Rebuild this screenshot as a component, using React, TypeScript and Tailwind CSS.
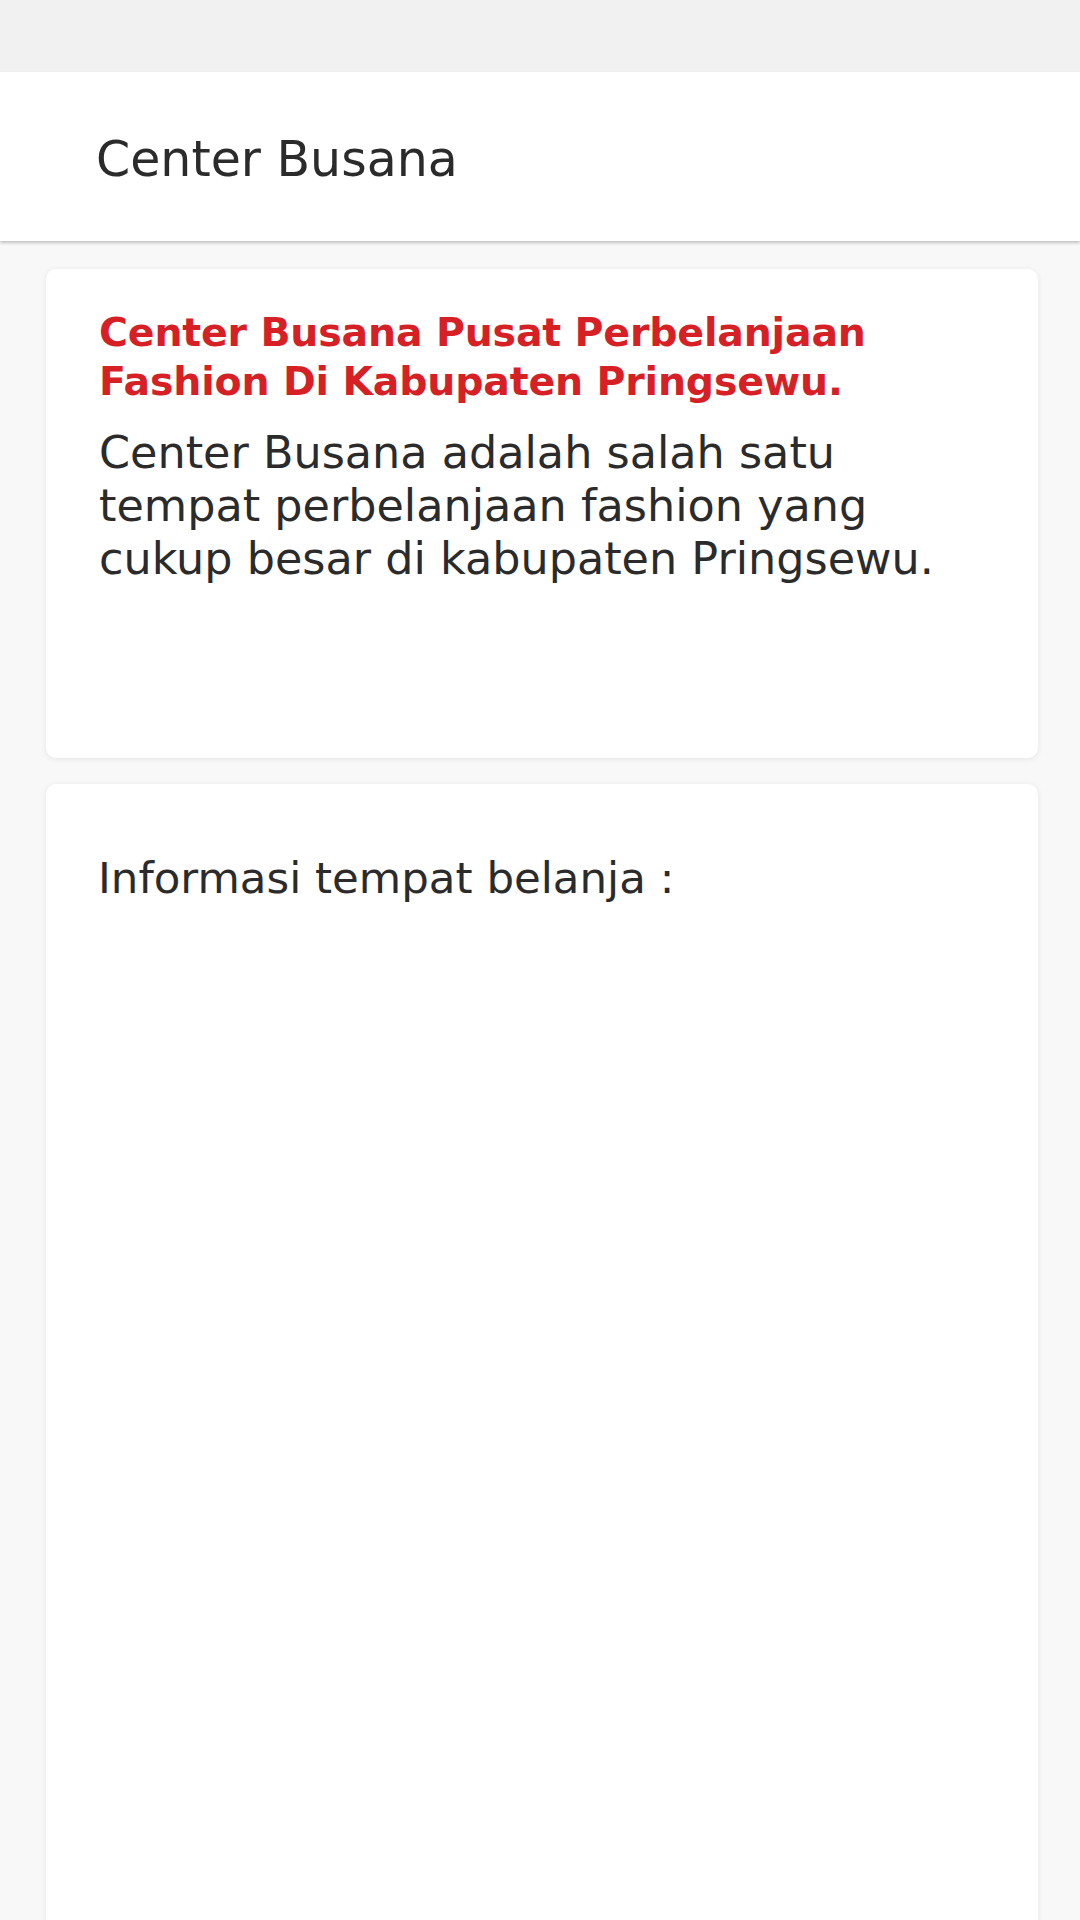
import React from "react";

export default function App() {
  const font = { fontFamily: '"DejaVu Sans", "Noto Sans", sans-serif' };
  return (
    <div className="min-h-[1920px] w-[1080px] bg-[#f8f8f8] overflow-hidden" style={font}>
      <div className="h-[72px] bg-[#f1f1f1]" />
      <header className="h-[169px] bg-white pl-[96px] pt-[60px] shadow-[0_2px_3px_rgba(0,0,0,0.22)] relative z-10">
        <h1 className="text-[49px] leading-[56px] text-[#2b2b2b] font-normal">Center Busana</h1>
      </header>
      <main className="flex flex-col gap-[26px] pt-[28px] pl-[46px] pr-[42px]">
        <section className="rounded-[10px] bg-white shadow-[0_1px_6px_rgba(0,0,0,0.08)] pl-[53px] pt-[39px] pb-[173px]">
          <h2 className="max-w-[880px] text-[39.5px] leading-[49px] font-bold text-[#d71f26] tracking-[-0.2px]">
            Center Busana Pusat Perbelanjaan Fashion Di Kabupaten Pringsewu.
          </h2>
          <p className="mt-[20px] max-w-[870px] text-[44.5px] leading-[53px] text-[#2b2b2b]">
            Center Busana adalah salah satu tempat perbelanjaan fashion yang cukup besar di kabupaten Pringsewu.
          </p>
        </section>
        <section className="rounded-[10px] bg-white shadow-[0_1px_6px_rgba(0,0,0,0.08)] pl-[52px] pt-[68px] min-h-[1200px]">
          <p className="text-[43.5px] leading-[53px] text-[#2b2b2b]">Informasi tempat belanja :</p>
        </section>
      </main>
    </div>
  );
}
